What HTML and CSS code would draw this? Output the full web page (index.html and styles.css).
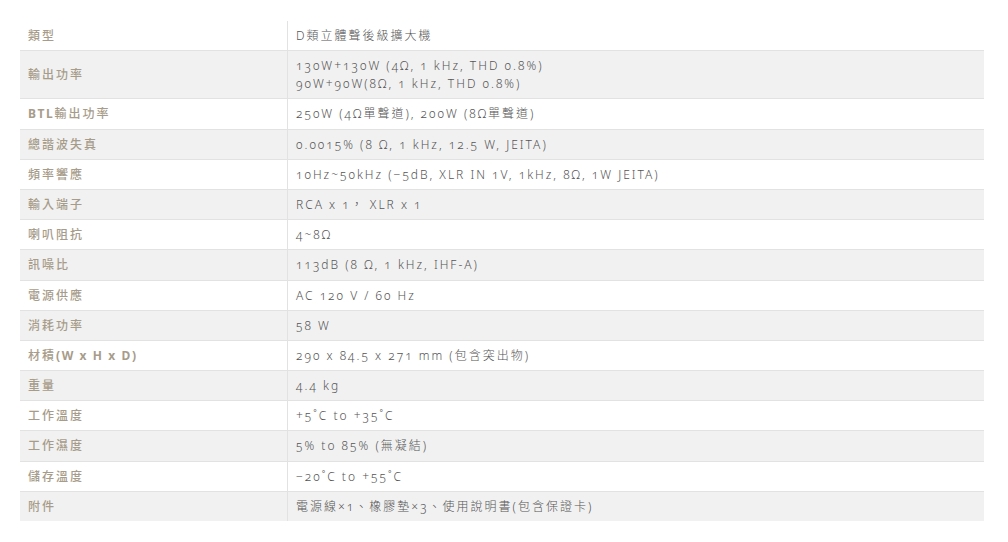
FILE: index.html
```html
<!DOCTYPE html>
<html lang="zh-Hant">
<head>
<meta charset="utf-8">
<title>規格</title>
<link rel="stylesheet" href="styles.css">
</head>
<body>
<table class="spec">
  <tbody>
    <tr><th>類型</th><td>D類立體聲後級擴大機</td></tr>
    <tr class="alt"><th>輸出功率</th><td>130W+130W (4Ω, 1 kHz, THD 0.8%)<br>90W+90W(8Ω, 1 kHz, THD 0.8%)</td></tr>
    <tr><th><b>BTL</b>輸出功率</th><td>250W (4Ω單聲道), 200W (8Ω單聲道)</td></tr>
    <tr class="alt"><th>總諧波失真</th><td>0.0015% (8 Ω, 1 kHz, 12.5 W, JEITA)</td></tr>
    <tr><th>頻率響應</th><td>10Hz~50kHz (−5dB, XLR IN 1V, 1kHz, 8Ω, 1W JEITA)</td></tr>
    <tr class="alt"><th>輸入端子</th><td>RCA x 1， XLR x 1</td></tr>
    <tr><th>喇叭阻抗</th><td>4~8Ω</td></tr>
    <tr class="alt"><th>訊噪比</th><td>113dB (8 Ω, 1 kHz, IHF-A)</td></tr>
    <tr><th>電源供應</th><td>AC 120 V / 60 Hz</td></tr>
    <tr class="alt"><th>消耗功率</th><td>58 W</td></tr>
    <tr><th>材積<b>(W x H x D)</b></th><td>290 x 84.5 x 271 mm (包含突出物)</td></tr>
    <tr class="alt"><th>重量</th><td>4.4 kg</td></tr>
    <tr><th>工作溫度</th><td>+5˚C to +35˚C</td></tr>
    <tr class="alt"><th>工作濕度</th><td>5% to 85% (無凝結)</td></tr>
    <tr><th>儲存溫度</th><td>−20˚C to +55˚C</td></tr>
    <tr class="alt"><th>附件</th><td>電源線×1、橡膠墊×3、使用說明書(包含保證卡)</td></tr>
  </tbody>
</table>
</body>
</html>
```

FILE: styles.css
```css
html, body {
  margin: 0;
  padding: 0;
  background: #ffffff;
}
body {
  padding: 21px 24px 0 20px;
  font-family: "Noto Sans", "Noto Sans CJK TC", sans-serif;
}
.spec {
  width: 964px;
  border-collapse: collapse;
  font-size: 12px;
  line-height: 18px;
}
.spec tr {
  border-bottom: 1px solid #e2e2e2;
}
.spec tr:last-child {
  border-bottom: none;
}
.spec tr.alt {
  background: #f1f1f1;
}
.spec th,
.spec td {
  padding: 6px 8px 5.2px 8px;
  text-align: left;
  vertical-align: middle;
}
.spec th {
  width: 251px;
  color: #a79c8a;
  font-weight: 500;
  letter-spacing: 2px;
  border-right: 1px solid #e2e2e2;
}
.spec th b {
  font-weight: 700;
  letter-spacing: 1.6px;
}
.spec td {
  color: #555555;
  font-weight: 300;
  letter-spacing: 2px;
  font-variant-numeric: oldstyle-nums;
  font-feature-settings: "onum" 1;
}
```
